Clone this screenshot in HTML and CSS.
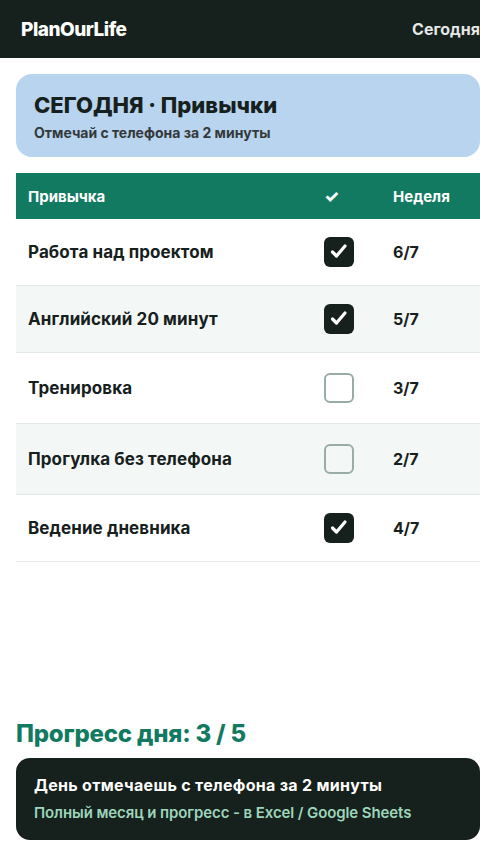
FILE: index.html
```
<!DOCTYPE html>
<html lang="ru">
<head>
  <meta charset="utf-8">
  <title>PlanOurLife - Сегодня</title>
  <link rel="stylesheet" href="styles.css">
</head>
<body>
<div class="page">
  <header class="topbar">
    <div class="logo">PlanOurLife</div>
    <nav class="nav"><a href="#">Сегодня</a></nav>
  </header>

  <main class="content">
    <section class="hero">
      <h1>СЕГОДНЯ · Привычки</h1>
      <p>Отмечай с телефона за 2 минуты</p>
    </section>

    <table class="habits">
      <thead>
        <tr>
          <th class="col-name">Привычка</th>
          <th class="col-check">✓</th>
          <th class="col-week">Неделя</th>
        </tr>
      </thead>
      <tbody>
        <tr>
          <td class="name">Работа над проектом</td>
          <td><span class="box done"><svg viewBox="0 0 30 30"><path d="M8.5 15l4 4 8.5-10"/></svg></span></td>
          <td>6/7</td>
        </tr>
        <tr>
          <td class="name">Английский 20 минут</td>
          <td><span class="box done"><svg viewBox="0 0 30 30"><path d="M8.5 15l4 4 8.5-10"/></svg></span></td>
          <td>5/7</td>
        </tr>
        <tr>
          <td class="name">Тренировка</td>
          <td><span class="box"></span></td>
          <td>3/7</td>
        </tr>
        <tr>
          <td class="name">Прогулка без телефона</td>
          <td><span class="box"></span></td>
          <td>2/7</td>
        </tr>
        <tr>
          <td class="name">Ведение дневника</td>
          <td><span class="box done"><svg viewBox="0 0 30 30"><path d="M8.5 15l4 4 8.5-10"/></svg></span></td>
          <td>4/7</td>
        </tr>
      </tbody>
    </table>

    <h2 class="progress">Прогресс дня: 3 / 5</h2>

    <div class="note">
      <div class="note-title">День отмечаешь с телефона за 2 минуты</div>
      <div class="note-sub">Полный месяц и прогресс - в Excel / Google Sheets</div>
    </div>
  </main>
</div>
</body>
</html>
```

FILE: styles.css
```
html, body {
  margin: 0;
  padding: 0;
  overflow-x: hidden;
  background: #fff;
}
body {
  font-family: Inter, "Noto Sans", sans-serif;
  color: #16201c;
}
.page {
  width: 496px;
}

/* top bar */
.topbar {
  display: flex;
  align-items: center;
  justify-content: space-between;
  height: 58px;
  padding: 0 16px 0 21px;
  background: #16201c;
}
.logo {
  color: #fff;
  font-size: 19px;
  font-weight: 800;
  letter-spacing: -0.5px;
}
.nav a {
  color: #e4e8e6;
  font-size: 16px;
  font-weight: 700;
  text-decoration: none;
}

.content {
  padding: 16px;
}

/* hero */
.hero {
  background: #b8d4ee;
  border-radius: 16px;
  padding: 17px 18px 16px;
}
.hero h1 {
  margin: 0;
  font-size: 22px;
  font-weight: 800;
  line-height: 28px;
}
.hero p {
  margin: 5px 0 0;
  font-size: 14px;
  font-weight: 700;
  color: #33393a;
}

/* table */
.habits {
  width: 100%;
  margin-top: 16px;
  border-collapse: collapse;
}
.habits th {
  height: 46px;
  padding: 0 12px;
  background: #117a61;
  color: #fff;
  font-size: 15px;
  font-weight: 700;
  text-align: left;
}
.habits th.col-name { width: 272px; }
.habits th.col-check { width: 45px; font-size: 17px; font-weight: 800; }
.habits td {
  padding: 18px 12px;
  font-size: 16px;
  font-weight: 700;
  border-bottom: 1px solid #e2e8e5;
  vertical-align: middle;
}
.habits td.name {
  font-size: 17px;
  letter-spacing: 0.1px;
}
.habits tbody tr:nth-child(even) td {
  background: #f3f7f6;
}
.box {
  display: block;
  box-sizing: border-box;
  width: 30px;
  height: 30px;
  border-radius: 6px;
  border: 2px solid #9aada4;
  margin: 2px 0;
}
.box.done {
  border: 0;
  background: #16201c;
  margin: 0;
}
.box svg {
  display: block;
  width: 30px;
  height: 30px;
}
.box path {
  fill: none;
  stroke: #fff;
  stroke-width: 3.2;
  stroke-linecap: round;
  stroke-linejoin: round;
}

/* progress */
.progress {
  margin: 155px 0 0;
  font-size: 24px;
  font-weight: 800;
  line-height: 34px;
  letter-spacing: -0.2px;
  color: #117a61;
}
.note {
  margin-top: 7px;
  background: #16201c;
  border-radius: 14px;
  padding: 17px 18px 18px;
}
.note-title {
  color: #fff;
  font-size: 16px;
  font-weight: 700;
  letter-spacing: 0.3px;
}
.note-sub {
  margin-top: 8px;
  color: #9dd6bb;
  font-size: 15px;
  font-weight: 600;
  letter-spacing: -0.1px;
}
```
